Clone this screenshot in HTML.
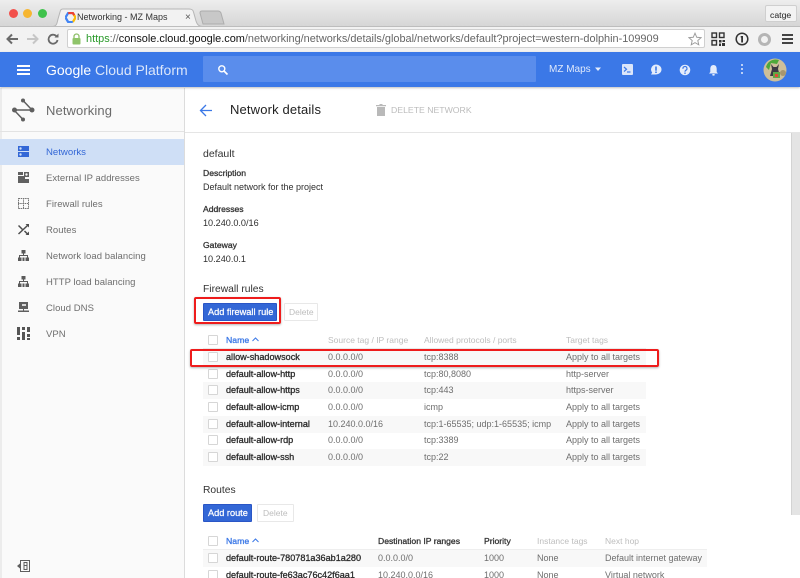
<!DOCTYPE html>
<html><head><meta charset="utf-8"><style>
html,body{margin:0;padding:0;background:#fff}
#p{position:relative;width:800px;height:578px;overflow:hidden;font-family:"Liberation Sans",sans-serif;background:#fff;filter:blur(.35px)}
#p div,#p span.t,#p svg{position:absolute}
.t{position:absolute;white-space:nowrap;line-height:12px;font-size:9.5px;color:#6b6b6b}
.b{color:#2b2b2b;font-size:9.1px;-webkit-text-stroke:.3px #2b2b2b}
.h{color:#333;font-size:8.6px;-webkit-text-stroke:.3px #333}
.g{color:#bdbdbd;font-size:8.5px}
.d{color:#2e2e2e;font-size:9px}
.s{color:#6e6e6e;font-size:9.5px;letter-spacing:.05px}
.r{color:#6e6e6e;font-size:9px}
.w{color:#fff;font-size:9.2px;-webkit-text-stroke:.25px #fff}
.n{color:#3b78e7;font-size:8.7px;-webkit-text-stroke:.3px #3b78e7}
.cb{width:8px;height:8px;border:1px solid #d6d6d6;background:#fff;border-radius:1px;left:208px}
.st{left:203px;height:17px;background:#f8f8f8}
</style></head><body><div id="p">

<!-- tab strip -->
<div style="left:0;top:0;width:800px;height:26px;background:linear-gradient(#ededed,#d6d6d6)"></div>
<div style="left:9px;top:9px;width:9px;height:9px;border-radius:50%;background:#f2514c"></div>
<div style="left:23px;top:9px;width:9px;height:9px;border-radius:50%;background:#f6b631"></div>
<div style="left:38px;top:9px;width:9px;height:9px;border-radius:50%;background:#3fc24c"></div>
<svg style="left:50px;top:7px" width="160" height="20" viewBox="0 0 160 20"><path d="M3 19.500C7 19 7 16 8 12L10 5C10.500 3 11 2 13 2H139C142 2 143 3 143.500 5L146 14C147 17 148 19 152 19.500" fill="#f2f2f2" stroke="#b5b5b5" stroke-width="1"/></svg>
<svg style="left:199px;top:10px" width="26" height="15" viewBox="0 0 26 15"><path d="M1 3Q1 1 3 1H19Q21 1 22 3L25 14H4Z" fill="#c8c8c8" stroke="#adadad"/></svg>
<svg style="left:65px;top:12px" width="11" height="11" viewBox="0 0 24 24"><path d="M17 2L23 12L17 22" fill="none" stroke="#fbbc05" stroke-width="5"/><path d="M17 22H7L1 12" fill="none" stroke="#4285f4" stroke-width="5"/><path d="M1 12L7 2H15" fill="none" stroke="#4285f4" stroke-width="5"/><path d="M7 2H17L20 7" fill="none" stroke="#ea4335" stroke-width="5"/></svg>
<span class="t" style="left:77px;top:11px;color:#333;font-size:9px">Networking - MZ Maps</span>
<span class="t" style="left:185px;top:12px;color:#555;font-size:10px">×</span>
<div style="left:765px;top:5px;width:32px;height:17px;background:#f3f3f3;border:1px solid #cfcfcf;border-radius:2px;box-sizing:border-box"></div>
<span class="t" style="left:770px;top:9px;color:#222;font-size:8.700px">catge</span>

<!-- toolbar -->
<div style="left:0;top:26px;width:800px;height:26px;background:#f2f2f2;border-top:1px solid #bdbdbd;box-sizing:border-box"></div>
<svg style="left:6px;top:33px" width="13" height="12" viewBox="0 0 13 12"><path d="M12 6H2M6 1.500L1.500 6L6 10.500" fill="none" stroke="#6a6a6a" stroke-width="2"/></svg>
<svg style="left:26px;top:33px" width="13" height="12" viewBox="0 0 13 12"><path d="M1 6H11M7 1.500L11.500 6L7 10.500" fill="none" stroke="#c6c6c6" stroke-width="2"/></svg>
<svg style="left:47px;top:33px" width="12" height="12" viewBox="0 0 12 12"><path d="M10 4A4.500 4.500 0 1 0 10.500 7" fill="none" stroke="#6a6a6a" stroke-width="1.800"/><path d="M7.500 4.500H11.500V0.500Z" fill="#6a6a6a"/></svg>
<div style="left:67px;top:29px;width:638px;height:19px;background:#fff;border:1px solid #d0d0d0;border-radius:2px;box-sizing:border-box"></div>
<svg style="left:72px;top:33px" width="9" height="12" viewBox="0 0 9 12"><path d="M2 5V3.500A2.500 2.500 0 0 1 7 3.500V5" fill="none" stroke="#8fc06a" stroke-width="1.300"/><rect x="0.500" y="5" width="8" height="6.500" rx="1" fill="#8fc46a"/></svg>
<span class="t" style="left:86px;top:33px;font-size:10.920px;color:#666"><span style="color:#2a9a2a">https</span>://<span style="color:#111">console.cloud.google.com</span>/networking/networks/details/global/networks/default?project=western-dolphin-109909</span>
<svg style="left:688px;top:32px" width="14" height="14" viewBox="0 0 24 24"><path d="M12 2L15 9L22.500 9.700L16.800 14.700L18.500 22L12 18.200L5.500 22L7.200 14.700L1.500 9.700L9 9Z" fill="#fff" stroke="#9a9a9a" stroke-width="1.600"/></svg>
<svg style="left:711px;top:32px" width="14" height="14" viewBox="0 0 14 14"><g fill="none" stroke="#333" stroke-width="1.400"><rect x="1" y="1" width="4.500" height="4.500"/><rect x="8.500" y="1" width="4.500" height="4.500"/><rect x="1" y="8.500" width="4.500" height="4.500"/></g><path d="M8 8h2.500v2.500H8zM11.500 8H14v2H11.500zM8 11.500h2V14H8zM11 11h3v3h-3z" fill="#333"/></svg>
<svg style="left:735px;top:32px" width="14" height="14" viewBox="0 0 14 14"><circle cx="7" cy="7" r="5.800" fill="none" stroke="#333" stroke-width="1.500"/><path d="M5.700 4H8V10.500H6.200V5.500H5.700Z" fill="#333"/></svg>
<div style="left:758px;top:33px;width:7px;height:7px;border:3px solid #b5b5b5;border-radius:50%"></div>
<div style="left:782px;top:34px;width:11px;height:2px;background:#444"></div>
<div style="left:782px;top:38px;width:11px;height:2px;background:#444"></div>
<div style="left:782px;top:42px;width:11px;height:2px;background:#444"></div>

<!-- blue header -->
<div style="left:0;top:52px;width:800px;height:35px;background:#3b78e7;box-shadow:0 1px 2px rgba(0,0,0,.25);z-index:3"></div>
<div style="z-index:4;left:0;top:0;width:800px;height:88px">
<div style="left:17px;top:65px;width:13px;height:1.500px;background:#fff"></div>
<div style="left:17px;top:69px;width:13px;height:1.500px;background:#fff"></div>
<div style="left:17px;top:73px;width:13px;height:1.500px;background:#fff"></div>
<span class="t" style="left:46px;top:63px;font-size:14px;line-height:15px;color:#fff">Google <span style="color:#dbe6fa">Cloud Platform</span></span>
<div style="left:203px;top:56px;width:333px;height:26px;background:#5a8dec;border-radius:1px"></div>
<svg style="left:217px;top:64px" width="12" height="12" viewBox="0 0 12 12"><circle cx="4.800" cy="4.800" r="3" fill="none" stroke="#fff" stroke-width="1.400"/><path d="M7 7L10.500 10.500" stroke="#fff" stroke-width="1.600"/></svg>
<span class="t" style="left:549px;top:64px;font-size:10px;color:#dfe9fb">MZ Maps</span>
<svg style="left:594px;top:67px" width="8" height="5" viewBox="0 0 8 5"><path d="M1 .5H7L4 4Z" fill="#e4ecfb"/></svg>
<svg style="left:622px;top:64px" width="11" height="11" viewBox="0 0 11 11"><rect width="11" height="11" rx="1" fill="#dbe6fa"/><path d="M2 3L4.500 5.300L2 7.500" fill="none" stroke="#3b78e7" stroke-width="1.200"/><path d="M5 8H8.500" stroke="#3b78e7" stroke-width="1.200"/></svg>
<svg style="left:650px;top:64px" width="12" height="12" viewBox="0 0 12 12"><path d="M6 0.500A5.500 5 0 0 1 6 10.500H1L2.200 8.500A5.500 5 0 0 1 6 0.500Z" fill="#e4ecfb"/><rect x="5.200" y="2.500" width="1.600" height="4.200" fill="#3b78e7"/><rect x="5.200" y="7.500" width="1.600" height="1.500" fill="#3b78e7"/></svg>
<svg style="left:679px;top:64px" width="12" height="12" viewBox="0 0 12 12"><circle cx="6" cy="6" r="5.300" fill="#e4ecfb"/><path d="M4 4.800A2 2 0 1 1 6.800 6.300C6.200 6.700 6 7 6 7.800" fill="none" stroke="#3b78e7" stroke-width="1.200"/><rect x="5.300" y="8.500" width="1.400" height="1.400" fill="#3b78e7"/></svg>
<svg style="left:708px;top:64px" width="11" height="12" viewBox="0 0 11 12"><path d="M5.500 1C3.300 1 2.300 2.800 2.300 5V8L1 9.500H10L8.700 8V5C8.700 2.800 7.700 1 5.500 1Z" fill="#e4ecfb"/><rect x="4.200" y="10" width="2.600" height="1.600" rx=".8" fill="#e4ecfb"/></svg>
<div style="left:741px;top:64px;width:2px;height:2px;background:#e4ecfb;border-radius:1px"></div>
<div style="left:741px;top:68px;width:2px;height:2px;background:#e4ecfb;border-radius:1px"></div>
<div style="left:741px;top:72px;width:2px;height:2px;background:#e4ecfb;border-radius:1px"></div>
<svg style="left:763px;top:58px" width="24" height="24" viewBox="0 0 24 24"><circle cx="12" cy="12" r="11.500" fill="#cdbf9a"/><path d="M3 9A10 10 0 0 1 16 2L14 6L8 5L6 12Z" fill="#4da83a"/><path d="M8 6L9 11L7 18H17L15 11L16 6L13.500 9H10.500Z" fill="#3d3a44"/><rect x="10" y="14" width="7" height="6" fill="#62a845"/><rect x="12" y="16" width="3" height="3" fill="#e04a3a"/><circle cx="20" cy="15" r="3" fill="#a7966f"/></svg>
</div>

<!-- sidebar -->
<div style="left:0;top:88px;width:185px;height:490px;background:#fafafa;border-right:1px solid #dcdcdc;box-sizing:border-box"></div>
<div style="left:0;top:88px;width:2px;height:490px;background:#ececec"></div>
<svg style="left:11px;top:97px" width="25" height="26" viewBox="0 0 25 26"><g stroke="#5f5f5f" stroke-width="1.500" fill="none"><path d="M3 13H21"/><path d="M12 3.500L21 13"/><path d="M3 13L12 22.500"/></g><circle cx="3.500" cy="13" r="2.500" fill="#5f5f5f"/><circle cx="21" cy="13" r="2.500" fill="#5f5f5f"/><circle cx="12" cy="3.500" r="2" fill="#5f5f5f"/><circle cx="12" cy="22.500" r="2" fill="#5f5f5f"/></svg>
<span class="t" style="left:46px;top:103px;font-size:13px;line-height:15px;color:#6a6a6a;letter-spacing:.1px">Networking</span>
<div style="left:0;top:131px;width:184px;height:1px;background:#e3e3e3"></div>
<div style="left:0;top:139px;width:184px;height:26px;background:#cfdff6"></div>

<svg style="left:18px;top:146px" width="11" height="11" viewBox="0 0 11 11"><path d="M0 0H11V5H0ZM0 6H11V11H0Z" fill="#3367d6"/><circle cx="2.500" cy="2.500" r="1.200" fill="#cfdff6"/><circle cx="2.500" cy="8.500" r="1.200" fill="#cfdff6"/></svg>
<span class="t" style="left:46px;top:147px;color:#3367d6;font-size:9.600px">Networks</span>

<svg style="left:18px;top:172px" width="11" height="11" viewBox="0 0 11 11"><path d="M0 3H5V0H0ZM0 11V4H7V7H11V11Z" fill="#616161"/><path d="M6 0H11V5H6Z" fill="#616161"/><circle cx="8.500" cy="2.500" r="1.200" fill="#fafafa"/></svg>
<span class="t s" style="left:46px;top:173px">External IP addresses</span>

<svg style="left:18px;top:198px" width="11" height="11" viewBox="0 0 11 11"><g fill="none" stroke="#757575" stroke-width="1" stroke-dasharray="1.500 .7"><rect x=".5" y=".5" width="10" height="10"/><path d="M0 5.500H11M5.500 0V11"/></g></svg>
<span class="t s" style="left:46px;top:199px">Firewall rules</span>

<svg style="left:18px;top:224px" width="11" height="11" viewBox="0 0 11 11"><g stroke="#4d4d4d" stroke-width="1.500" fill="none"><path d="M.5 1.500L4.500 5.500M6.500 7L9.500 10"/><path d="M.5 10L9.500 1.500"/></g><path d="M7.500 0H11V3.500ZM7.500 11H11V7.500Z" fill="#4d4d4d"/></svg>
<span class="t s" style="left:46px;top:225px">Routes</span>

<svg style="left:18px;top:250px" width="11" height="11" viewBox="0 0 11 11"><path d="M3.500 0H7.500V3.500H6V5H10V7.500H11V11H7.500V7.500H9V6H2V7.500H3.500V11H0V7.500H1V5H5V3.500H3.500ZM4.500 7.500H6.500V11H4.500Z" fill="#5a5a5a"/></svg>
<span class="t s" style="left:46px;top:251px">Network load balancing</span>

<svg style="left:18px;top:276px" width="11" height="11" viewBox="0 0 11 11"><path d="M3.500 0H7.500V3.500H6V5H10V7.500H11V11H7.500V7.500H9V6H2V7.500H3.500V11H0V7.500H1V5H5V3.500H3.500ZM4.500 7.500H6.500V11H4.500Z" fill="#5a5a5a"/></svg>
<span class="t s" style="left:46px;top:277px">HTTP load balancing</span>

<svg style="left:18px;top:302px" width="11" height="11" viewBox="0 0 11 11"><path d="M1 0H10V7H6V8.500H11V10H0V8.500H5V7H1Z" fill="#5f5f5f"/><path d="M4 2H8V4H4Z" fill="#d8d8d8"/></svg>
<span class="t s" style="left:46px;top:303px">Cloud DNS</span>

<svg style="left:17px;top:327px" width="13" height="13" viewBox="0 0 13 13"><path d="M0 0H3V8H0ZM0 10H3V13H0ZM5 0H8V3H5ZM5 5H8V13H5ZM10 0H13V5H10ZM10 7H13V10H10ZM10 11H13V13H10Z" fill="#555"/></svg>
<span class="t s" style="left:46px;top:329px">VPN</span>

<svg style="left:17px;top:560px" width="13" height="12" viewBox="0 0 13 12"><rect x="3.500" y=".5" width="9" height="11" fill="none" stroke="#5f5f5f"/><path d="M7 2.500H10V9.500H7Z M7 5.500H10" fill="none" stroke="#5f5f5f"/><path d="M0 6L3 3.500V8.500Z" fill="#5f5f5f"/></svg>

<!-- main header -->
<svg style="left:199px;top:104px" width="14" height="13" viewBox="0 0 14 13"><path d="M13 6.500H2M7 1L1.500 6.500L7 12" fill="none" stroke="#3b78e7" stroke-width="1.300"/></svg>
<span class="t" style="left:230px;top:102px;font-size:13px;line-height:15px;color:#222;letter-spacing:.15px">Network details</span>
<svg style="left:376px;top:104px" width="10" height="12" viewBox="0 0 10 12"><path d="M1 3H9V12H1ZM0 1H3.500V0H6.500V1H10V2.300H0Z" fill="#b9b9b9"/></svg>
<span class="t" style="left:391px;top:104px;font-size:8.700px;color:#bcbcbc">DELETE NETWORK</span>
<div style="left:185px;top:132px;width:615px;height:1px;background:#e5e5e5"></div>
<div style="left:791px;top:133px;width:9px;height:382px;background:#e4e4e4;border-left:1px solid #d3d3d3;box-sizing:border-box"></div>

<!-- details -->
<span class="t" style="left:203px;top:148px;font-size:10.500px;color:#333">default</span>
<span class="t h" style="left:203px;top:167px">Description</span>
<span class="t d" style="left:203px;top:181px">Default network for the project</span>
<span class="t h" style="left:203px;top:203px">Addresses</span>
<span class="t d" style="left:203px;top:217px;font-size:9.100px">10.240.0.0/16</span>
<span class="t h" style="left:203px;top:239px">Gateway</span>
<span class="t d" style="left:203px;top:253px;font-size:9.100px">10.240.0.1</span>

<!-- firewall -->
<span class="t" style="left:203px;top:284px;font-size:10.300px;color:#333">Firewall rules</span>
<div style="left:203px;top:303px;width:74px;height:18px;background:#3367d6;border:1px solid #2a56c6;box-sizing:border-box;border-radius:1px"></div>
<span class="t w" style="left:208px;top:306px">Add firewall rule</span>
<div style="left:284px;top:303px;width:34px;height:18px;background:#fff;border:1px solid #e8e8e8;box-sizing:border-box;border-radius:1px"></div>
<span class="t g" style="left:289px;top:306px">Delete</span>

<div class="st" style="top:349px;width:443px"></div>
<div class="st" style="top:382px;width:443px"></div>
<div class="st" style="top:416px;width:443px"></div>
<div class="st" style="top:449px;width:443px"></div>
<div style="left:203px;top:348px;width:443px;height:1px;background:#eee"></div>

<div class="cb" style="top:335px"></div>
<span class="t n" style="left:226px;top:334px">Name</span>
<svg style="left:252px;top:337px" width="7" height="5" viewBox="0 0 7 5"><path d="M.5 4L3.500 1L6.500 4" fill="none" stroke="#3b78e7" stroke-width="1"/></svg>
<span class="t g" style="left:328px;top:334px">Source tag / IP range</span>
<span class="t g" style="left:424px;top:334px">Allowed protocols / ports</span>
<span class="t g" style="left:566px;top:334px">Target tags</span>

<div class="cb" style="top:352px"></div>
<span class="t b" style="left:226px;top:351px">allow-shadowsock</span><span class="t r" style="left:328px;top:351px">0.0.0.0/0</span><span class="t r" style="left:424px;top:351px">tcp:8388</span><span class="t r" style="left:566px;top:351px">Apply to all targets</span>

<div class="cb" style="top:369px"></div>
<span class="t b" style="left:226px;top:368px">default-allow-http</span><span class="t r" style="left:328px;top:368px">0.0.0.0/0</span><span class="t r" style="left:424px;top:368px">tcp:80,8080</span><span class="t r" style="left:566px;top:368px">http-server</span>

<div class="cb" style="top:385px"></div>
<span class="t b" style="left:226px;top:384px">default-allow-https</span><span class="t r" style="left:328px;top:384px">0.0.0.0/0</span><span class="t r" style="left:424px;top:384px">tcp:443</span><span class="t r" style="left:566px;top:384px">https-server</span>

<div class="cb" style="top:402px"></div>
<span class="t b" style="left:226px;top:401px">default-allow-icmp</span><span class="t r" style="left:328px;top:401px">0.0.0.0/0</span><span class="t r" style="left:424px;top:401px">icmp</span><span class="t r" style="left:566px;top:401px">Apply to all targets</span>

<div class="cb" style="top:419px"></div>
<span class="t b" style="left:226px;top:418px">default-allow-internal</span><span class="t r" style="left:328px;top:418px">10.240.0.0/16</span><span class="t r" style="left:424px;top:418px">tcp:1-65535; udp:1-65535; icmp</span><span class="t r" style="left:566px;top:418px">Apply to all targets</span>

<div class="cb" style="top:435px"></div>
<span class="t b" style="left:226px;top:434px">default-allow-rdp</span><span class="t r" style="left:328px;top:434px">0.0.0.0/0</span><span class="t r" style="left:424px;top:434px">tcp:3389</span><span class="t r" style="left:566px;top:434px">Apply to all targets</span>

<div class="cb" style="top:452px"></div>
<span class="t b" style="left:226px;top:451px">default-allow-ssh</span><span class="t r" style="left:328px;top:451px">0.0.0.0/0</span><span class="t r" style="left:424px;top:451px">tcp:22</span><span class="t r" style="left:566px;top:451px">Apply to all targets</span>

<!-- red annotations -->
<div style="left:194px;top:297px;width:87px;height:27px;border:2px solid #ee1c1c;border-radius:2px;box-sizing:border-box;box-shadow:0 1px 2px rgba(0,0,0,.3)"></div>
<div style="left:190px;top:349px;width:469px;height:18px;border:2px solid #ee1c1c;border-radius:2px;box-sizing:border-box;box-shadow:0 1px 2px rgba(0,0,0,.3)"></div>

<!-- routes -->
<span class="t" style="left:203px;top:485px;font-size:10.300px;color:#333">Routes</span>
<div style="left:203px;top:504px;width:49px;height:18px;background:#3367d6;border:1px solid #2a56c6;box-sizing:border-box;border-radius:1px"></div>
<span class="t w" style="left:208px;top:507px">Add route</span>
<div style="left:257px;top:504px;width:37px;height:18px;background:#fff;border:1px solid #e8e8e8;box-sizing:border-box;border-radius:1px"></div>
<span class="t g" style="left:263px;top:507px">Delete</span>

<div class="st" style="top:550px;width:504px"></div>
<div style="left:203px;top:549px;width:504px;height:1px;background:#eee"></div>
<div class="cb" style="top:536px"></div>
<span class="t n" style="left:226px;top:535px">Name</span>
<svg style="left:252px;top:538px" width="7" height="5" viewBox="0 0 7 5"><path d="M.5 4L3.500 1L6.500 4" fill="none" stroke="#3b78e7" stroke-width="1"/></svg>
<span class="t h" style="left:378px;top:535px">Destination IP ranges</span>
<span class="t h" style="left:484px;top:535px">Priority</span>
<span class="t g" style="left:537px;top:535px">Instance tags</span>
<span class="t g" style="left:605px;top:535px">Next hop</span>

<div class="cb" style="top:553px"></div>
<span class="t b" style="left:226px;top:552px">default-route-780781a36ab1a280</span><span class="t r" style="left:378px;top:552px">0.0.0.0/0</span><span class="t r" style="left:484px;top:552px">1000</span><span class="t r" style="left:537px;top:552px">None</span><span class="t r" style="left:605px;top:552px">Default internet gateway</span>
<div class="cb" style="top:570px"></div>
<span class="t b" style="left:226px;top:569px">default-route-fe63ac76c42f6aa1</span><span class="t r" style="left:378px;top:569px">10.240.0.0/16</span><span class="t r" style="left:484px;top:569px">1000</span><span class="t r" style="left:537px;top:569px">None</span><span class="t r" style="left:605px;top:569px">Virtual network</span>
</div></body></html>
